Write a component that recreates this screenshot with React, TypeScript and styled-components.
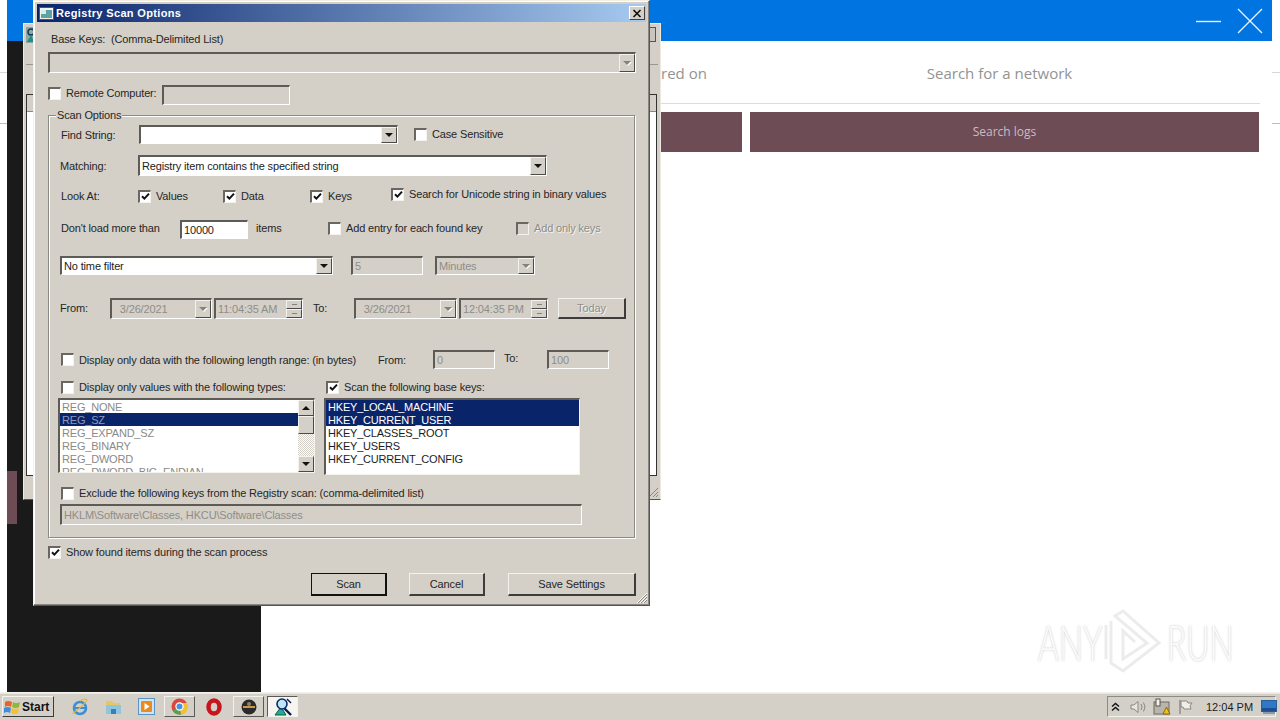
import React from "react";
import styled, { createGlobalStyle } from "styled-components";

const Global = createGlobalStyle`
  html, body { margin: 0; padding: 0; background: #fff; }
  * { box-sizing: border-box; }
`;

const FACE = "#d4d0c8";
const UI = `"Liberation Sans", Arial, sans-serif`;

const Shell = styled.div`
  position: relative; width: 1280px; height: 720px; overflow: hidden;
  display: flex; flex-direction: column; background: #fff; font-family: ${UI};
`;
const Header = styled.header`
  height: 41px; margin: 0 8px 0 7px; background: #0074e0; flex: none;
  display: flex; align-items: center; justify-content: flex-end; gap: 15px; padding-right: 9px;
`;
const Body = styled.div`flex: 1; display: flex; min-height: 0;`;
const EdgeStrip = styled.div`
  width: ${p => p.$w}px; flex: none; padding-top: 31px;
  &::before { content: ""; display: block; height: 50px; border-top: 1px solid #d8d8d8; border-bottom: 1px solid #bdbdbd; }
`;
const Sidebar = styled.aside`width: 254px; flex: none; background: #1a1a1a; padding-top: 430px;`;
const SideChip = styled.div`width: 10px; height: 53px; background: #6e4c55;`;
const Main = styled.main`flex: 1; padding: 0 13px 0 400px; position: relative;`;
const Tabs = styled.div`display: flex; height: 63px; border-bottom: 1px solid #dcdcdc; margin-right: -1px;`;
const Tab = styled.div`
  width: ${p => (p.$w ? `${p.$w}px` : "auto")}; flex: ${p => (p.$w ? "none" : 1)};
  text-align: ${p => (p.$w ? "right" : "center")}; padding-right: ${p => (p.$w ? 45 : 12)}px;
  font: 15px/65px "Open Sans", sans-serif; color: #939393; white-space: nowrap;
`;
const Actions = styled.div`display: flex; gap: 8px; margin-top: 8px;`;
const Action = styled.div`
  height: 40px; background: #6e4c55; color: #c9bcc0; font: 12px/40px "Open Sans", sans-serif; text-align: center;
  width: ${p => (p.$w ? `${p.$w}px` : "auto")}; flex: ${p => (p.$w ? "none" : 1)};
`;
const Watermark = styled.div`
  position: absolute; left: 777px; top: 566px; display: flex; align-items: center; gap: 1px;
`;
const MarkText = styled.span`
  display: block; width: 63px; transform: scaleX(0.64); transform-origin: left center; white-space: nowrap;
  font: 300 50px/50px Lato, sans-serif; color: #fbfbfb;
  text-shadow: 0 0 2px #cfcfcf, 0 0 4px #e2e2e2;
`;

/* windows */
const BackWindow = styled.div`
  position: absolute; left: 23px; top: 23px; width: 638px; height: 477px; background: ${FACE};
  border: 1px solid #eeeae2; border-bottom-color: #555; padding: 3px 2px 0;
  display: flex; flex-direction: column;
`;
const BackClose = styled.div`
  align-self: flex-end; width: 9px; height: 15px; margin-right: 2px; background: #c9c6bf;
  border: 1px solid #555;
`;
const BackGlyph = styled.svg`position: absolute; left: 2px; top: 3px;`;
const BackRule = styled.div`margin-top: 22px; height: 1px; background: #9a978f;`;
const BackList = styled.div`
  margin-top: 29px; height: 382px; margin-right: 1px; background: #fff; border: 1px solid #333;
`;
const BackListHead = styled.div`height: 17px; background: ${FACE}; border-bottom: 1px solid #888;`;
const BackGrip = styled.svg`position: absolute; right: 1px; bottom: 1px;`;

const Dialog = styled.section`
  position: absolute; left: 33px; top: 0; width: 617px; height: 606px; background: ${FACE};
  border: 1px solid #555; border-top-color: #f4efe2; border-left-color: #f4f2ec;
  box-shadow: inset -1px -1px 0 #8a8782, inset 1px 1px 0 #fff;
  padding: 3px 3px 0; color: #222; font-size: 11px;
`;
const TitleBar = styled.div`
  height: 18px; display: flex; align-items: center; padding: 0 1px 0 2px; gap: 2px;
  background: linear-gradient(90deg, #0a246a, #a6caf0);
`;
const TitleText = styled.h1`
  flex: 1; margin: 0; font: bold 11px ${UI}; color: #fff; letter-spacing: 0.35px; white-space: nowrap;
`;
const CloseBtn = styled.div`
  width: 16px; height: 14px; background: ${FACE}; border: 1px solid; border-color: #fff #404040 #404040 #fff;
  display: flex; align-items: center; justify-content: center;
`;
const Content = styled.div`padding: 0 11px;`;
const Row = styled.div`
  display: flex; align-items: center; height: ${p => p.$h}px; margin-top: ${p => p.$mt}px;
  margin-left: ${p => p.$ml || 0}px; white-space: nowrap;
`;
const Text = styled.span`
  flex: none; width: ${p => (p.$w ? `${p.$w}px` : "auto")}; margin-left: ${p => p.$ml || 0}px;
  margin-bottom: ${p => p.$lift || 0}px; padding-left: ${p => p.$pl || 0}px;
  color: ${p => (p.$off ? "#8f8d88" : "#262626")};
  text-shadow: ${p => (p.$off ? "1px 1px 0 #f6f4f0" : "none")};
  letter-spacing: -0.15px;
`;
const Group = styled.div`
  position: relative; margin-top: 10px; width: 587px; height: 423px; padding: 9px 0 0 11px;
  border: 1px solid #8d8b85; box-shadow: 1px 1px 0 #fff, inset 1px 1px 0 #fff;
`;
const Legend = styled.span`
  position: absolute; left: 7px; top: -7px; padding: 0 1px; background: ${FACE}; color: #262626; letter-spacing: -0.15px;
`;
const Sunken = styled.div`
  flex: none; width: ${p => (p.$w ? `${p.$w}px` : "100%")}; height: ${p => p.$h || 19}px;
  margin-left: ${p => p.$ml || 0}px; background: ${p => (p.$off ? FACE : "#fff")};
  border: 2px solid; border-color: #5e5b56 #fff #fff #5e5b56; border-right-width: 1px; border-bottom-width: 1px;
  display: flex; align-items: center; padding-left: 2px; overflow: hidden;
  color: ${p => (p.$off ? "#8f8d88" : "#1c1c1c")};
`;
const FieldText = styled.span`flex: 1; overflow: hidden; letter-spacing: -0.15px;`;
const DropBtn = styled.div`
  flex: none; width: 16px; height: 100%; background: ${FACE};
  border: 1px solid; border-color: #f4f2ec #4a4a48 #4a4a48 #f4f2ec;
  display: flex; align-items: center; justify-content: center;
`;
const Tri = styled.i`
  display: block; width: 0; height: 0; border-left: 4px solid transparent; border-right: 4px solid transparent;
  border-top: 4px solid ${p => (p.$off ? "#85827c" : "#111")};
  filter: ${p => (p.$off ? "drop-shadow(1px 1px 0 #fff)" : "none")};
`;
const TriUp = styled(Tri)`border-top: 0; border-bottom: 4px solid #111;`;
const Spin = styled.div`flex: none; width: 16px; height: 100%; display: flex; flex-direction: column;`;
const SpinPart = styled.div`
  flex: 1; background: ${FACE}; border: 1px solid; border-color: #f4f2ec #4a4a48 #4a4a48 #f4f2ec;
  display: flex; align-items: center; justify-content: center;
`;
const SpinTick = styled.i`display: block; width: 5px; height: 1px; background: #85827c;`;
const Box = styled.span`
  flex: none; width: 13px; height: 13px; background: ${p => (p.$off ? FACE : "#fff")};
  border: 1px solid; border-color: #6a6760 #f4f2ec #f4f2ec #6a6760; border-width: 2px 1px 1px 2px;
  display: flex; align-items: center; justify-content: center;
`;
const CheckWrap = styled.label`
  flex: none; display: flex; align-items: center; gap: 5px; height: 14px;
  width: ${p => (p.$w ? `${p.$w}px` : "auto")}; margin-left: ${p => p.$ml || 0}px;
  margin-bottom: ${p => p.$lift || 0}px;
`;
const PushButton = styled.button`
  flex: none; width: ${p => p.$w}px; height: ${p => p.$h || 23}px; margin-left: ${p => p.$ml || 0}px; padding: 0;
  background: ${FACE}; font: 11px ${UI}; letter-spacing: -0.1px; color: ${p => (p.$off ? "#8f8d88" : "#262626")};
  text-shadow: ${p => (p.$off ? "1px 1px 0 #f6f4f0" : "none")};
  border: 1px solid; border-color: #f4f2ec #3c3c3a #3c3c3a #f4f2ec; border-right-width: 2px; border-bottom-width: 2px;
  ${p => (p.$def ? "border-color: #111;" : "")}
`;
const ListBox = styled.div`
  flex: none; display: flex; align-self: flex-start; width: ${p => p.$w}px; height: ${p => p.$h}px;
  margin-left: ${p => p.$ml || 0}px; background: #fff; overflow: hidden;
  border: 2px solid; border-color: #5e5b56 #f4f2ec #f4f2ec #5e5b56; border-right-width: 1px; border-bottom-width: 1px;
`;
const ListItems = styled.ul`flex: 1; margin: 0; padding: 0; list-style: none; overflow: hidden;`;
const ListItem = styled.li`
  height: 13px; line-height: 13px; padding: 1px 0 0 2px; font-size: 11px; white-space: nowrap; letter-spacing: -0.2px;
  background: ${p => (p.$sel ? "#0a246a" : "transparent")};
  color: ${p => (p.$sel ? (p.$off ? "#8f99b8" : "#fff") : p.$off ? "#8a8a88" : "#1c1c1c")};
`;
const ScrollBar = styled.div`
  flex: none; width: 16px; display: flex; flex-direction: column;
  background: repeating-conic-gradient(#fff 0 25%, ${FACE} 0 50%) 0 0 / 2px 2px;
`;
const ScrollBtn = styled.div`
  flex: none; height: ${p => p.$h || 16}px; background: ${FACE};
  border: 1px solid; border-color: #f4f2ec #4a4a48 #4a4a48 #f4f2ec;
  display: flex; align-items: center; justify-content: center;
`;
const ScrollTrack = styled.span`flex: 1;`;
const ButtonRow = styled.div`display: flex; margin-top: 14px; padding-left: 263px;`;
const Grip = styled.svg`position: absolute; right: 1px; bottom: 1px;`;

/* taskbar */
const Taskbar = styled.footer`
  height: 28px; flex: none; background: ${FACE}; border-top: 1px solid #f4f2ec; box-shadow: inset 0 1px 0 #e9e6df;
  display: flex; align-items: center; padding: 0 4px 0 2px;
`;
const StartBtn = styled.button`
  width: 52px; height: 21px; padding: 0 0 0 1px; display: flex; align-items: center; gap: 1px; background: ${FACE};
  border: 1px solid; border-color: #f4f2ec #3c3c3a #3c3c3a #f4f2ec; font: bold 12px ${UI}; color: #111;
`;
const TaskSlot = styled.div`
  flex: none; width: ${p => p.$w}px; height: 21px; margin-left: ${p => p.$ml}px;
  display: flex; align-items: center; justify-content: center;
  background: ${p => (p.$active ? "#f6f5f2" : FACE)};
  ${p => (p.$raised ? "border: 1px solid; border-color: #f4f2ec #5a5a58 #5a5a58 #f4f2ec;" : "")}
  ${p => (p.$active ? "border: 1px solid; border-color: #5a5a58 #f4f2ec #f4f2ec #5a5a58;" : "")}
`;
const Tray = styled.div`
  margin-left: auto; width: 169px; height: 21px; display: flex; align-items: center; padding-left: 3px;
  border: 1px solid; border-color: #8d8b85 #f4f2ec #f4f2ec #8d8b85; color: #1c1c1c;
`;
const TrayIcon = styled.svg`flex: none; margin-left: ${p => p.$ml || 0}px;`;
const Clock = styled.span`flex: none; margin-left: 13px; width: 52px; font-size: 11px; white-space: nowrap;`;

const Tick = () => (
  <svg width="9" height="9" viewBox="0 0 9 9"><path d="M1 4.2 L3.4 6.6 L8 1.6" fill="none" stroke="#111" strokeWidth="2" /></svg>
);
const Check = ({ on, off, children, w, ml, lift }: any) => (
  <CheckWrap $w={w} $ml={ml} $lift={lift}>
    <Box $off={off}>{on && <Tick />}</Box>
    <Text $off={off}>{children}</Text>
  </CheckWrap>
);
const Combo = ({ w, h, ml, off, children }: any) => (
  <Sunken $w={w} $h={h} $ml={ml} $off={off}>
    <FieldText>{children}</FieldText>
    <DropBtn><Tri $off={off} /></DropBtn>
  </Sunken>
);
const TimeField = ({ w, children, ml }: any) => (
  <Sunken $w={w} $h={21} $ml={ml} $off>
    <FieldText>{children}</FieldText>
    <Spin><SpinPart><SpinTick /></SpinPart><SpinPart><SpinTick /></SpinPart></Spin>
  </Sunken>
);

const TYPES = ["REG_NONE", "REG_SZ", "REG_EXPAND_SZ", "REG_BINARY", "REG_DWORD", "REG_DWORD_BIG_ENDIAN"];
const KEYS = ["HKEY_LOCAL_MACHINE", "HKEY_CURRENT_USER", "HKEY_CLASSES_ROOT", "HKEY_USERS", "HKEY_CURRENT_CONFIG"];

const ScanAppIcon = ({ size = 20 }: { size?: number }) => (
  <svg width={size} height={size} viewBox="0 0 20 20">
    <path d="M2 18 L8 10 L13 18 Z" fill="#2aa5a0" stroke="#063" strokeWidth="1" />
    <path d="M11 11 L18 18" stroke="#0a1a4a" strokeWidth="2.4" />
    <circle cx="9" cy="7" r="5" fill="#bfe6f7" stroke="#0a2a6a" strokeWidth="1.6" />
    <path d="M14 2 L18 6" stroke="#0a1a4a" strokeWidth="1.4" />
  </svg>
);

export default function App() {
  return (
    <Shell>
      <Global />
      <Header>
        <svg width="26" height="26" viewBox="0 0 26 26"><path d="M0 13.5 H25" stroke="#e8f2ff" strokeWidth="1.4" /></svg>
        <svg width="26" height="26" viewBox="0 0 26 26"><path d="M1 1 L25 25 M25 1 L1 25" stroke="#eef6ff" strokeWidth="1.3" /></svg>
      </Header>
      <Body>
        <EdgeStrip $w={7} />
        <Sidebar><SideChip /></Sidebar>
        <Main>
          <Tabs>
            <Tab $w={90}>red on</Tab>
            <Tab>Search for a network</Tab>
          </Tabs>
          <Actions>
            <Action $w={81} />
            <Action>Search logs</Action>
          </Actions>
          <Watermark>
            <MarkText>ANY</MarkText>
            <svg width="64" height="70" viewBox="0 0 62 70">
              <g fill="none" stroke="#ececec" strokeWidth="3">
                <path d="M8 14 V56 L20 64 L56 36 L20 4 L12 9 L44 36 L20 52 V24 L32 35" />
                <path d="M3 18 V52" />
              </g>
            </svg>
            <MarkText>RUN</MarkText>
          </Watermark>
        </Main>
        <EdgeStrip $w={8} />
      </Body>
      <Taskbar>
        <StartBtn>
          <svg width="17" height="16" viewBox="0 0 17 16">
            <path d="M1 3 Q4 1 8 3 L7 8 Q4 6 1 8 Z" fill="#e8622c" />
            <path d="M9 3 Q12 5 16 3 L15 8 Q12 10 8 8 Z" fill="#8fb83a" />
            <path d="M0 9 Q4 7 7 9 L6 14 Q3 12 0 14 Z" fill="#3f8fd8" />
            <path d="M8 9 Q11 11 15 9 L14 14 Q11 16 7 14 Z" fill="#f2c230" />
          </svg>
          Start
        </StartBtn>
        <TaskSlot $w={18} $ml={17}>
          <svg width="18" height="18" viewBox="0 0 18 18">
            <circle cx="9" cy="10" r="6" fill="none" stroke="#3b8fd6" strokeWidth="2.6" />
            <path d="M4 10 H14" stroke="#3b8fd6" strokeWidth="2" />
            <path d="M3 15 Q0 17 5 13 Q14 6 16 2 Q13 0 9 3" fill="none" stroke="#e6b63a" strokeWidth="1.2" />
          </svg>
        </TaskSlot>
        <TaskSlot $w={18} $ml={15}>
          <svg width="17" height="17" viewBox="0 0 17 17">
            <path d="M1 3 H7 L9 5 H15 V8 H1 Z" fill="#e5c765" />
            <path d="M1 7 H16 V16 H1 Z" fill="#8ec6e0" />
            <path d="M6 16 V11 H11 V16 Z" fill="#3c7fb4" />
          </svg>
        </TaskSlot>
        <TaskSlot $w={18} $ml={15}>
          <svg width="17" height="17" viewBox="0 0 17 17">
            <rect x="0.5" y="0.5" width="16" height="16" fill="#cfe3f2" stroke="#5a93c6" />
            <rect x="3" y="3" width="11" height="11" rx="1" fill="#ec8a1e" />
            <path d="M6.5 5 L11.5 8.5 L6.5 12 Z" fill="#fff" />
          </svg>
        </TaskSlot>
        <TaskSlot $w={31} $ml={9} $raised>
          <svg width="17" height="17" viewBox="0 0 17 17">
            <circle cx="8.5" cy="8.5" r="8" fill="#d9483b" />
            <path d="M8.5 8.5 L1.6 12.5 A8 8 0 0 0 10 16.4 Z" fill="#4ca84f" />
            <path d="M8.5 8.5 L10 16.4 A8 8 0 0 0 16 5 L8.5 5 Z" fill="#f0c330" />
            <circle cx="8.5" cy="8.5" r="3.6" fill="#4f8fe0" stroke="#fff" strokeWidth="1.2" />
          </svg>
        </TaskSlot>
        <TaskSlot $w={16} $ml={11}>
          <svg width="16" height="18" viewBox="0 0 16 18">
            <ellipse cx="8" cy="9" rx="5.5" ry="6.5" fill="none" stroke="#c8141c" strokeWidth="4.5" />
          </svg>
        </TaskSlot>
        <TaskSlot $w={31} $ml={11} $raised>
          <svg width="16" height="16" viewBox="0 0 16 16">
            <circle cx="8" cy="8" r="7.5" fill="#2c2a28" />
            <path d="M2 7 H14 V9 H2 Z" fill="#c79a4b" />
            <circle cx="8" cy="5" r="2" fill="#8a8178" />
          </svg>
        </TaskSlot>
        <TaskSlot $w={31} $ml={3} $active><ScanAppIcon /></TaskSlot>
        <Tray>
          <TrayIcon width="9" height="10" viewBox="0 0 9 10">
            <path d="M1 4.5 L4.5 1.5 L8 4.5 M1 8.5 L4.5 5.5 L8 8.5" fill="none" stroke="#111" strokeWidth="1.4" />
          </TrayIcon>
          <TrayIcon $ml={10} width="17" height="14" viewBox="0 0 17 14">
            <path d="M1 5 H4 L8 1.5 V12.5 L4 9 H1 Z" fill="#e8e6e0" stroke="#8a8880" />
            <path d="M11 4 Q13 7 11 10 M13.5 2.5 Q16.5 7 13.5 11.5" fill="none" stroke="#8a8880" />
          </TrayIcon>
          <TrayIcon $ml={6} width="18" height="17" viewBox="0 0 18 17">
            <rect x="1" y="4" width="15" height="12" fill="#b9b5aa" stroke="#6e6a60" />
            <rect x="3" y="1" width="4" height="7" fill="#f4f2ec" stroke="#555" />
            <path d="M10 16 L13.5 9 L17 16 Z" fill="#f0c020" stroke="#8a6a00" />
          </TrayIcon>
          <TrayIcon $ml={7} width="15" height="16" viewBox="0 0 15 16">
            <path d="M2 1 V15" stroke="#8a8880" strokeWidth="1.4" />
            <path d="M3 2 H9 L10 4 H14 L12 7 L13 10 H6 L5 8 H3 Z" fill="#f0eee8" stroke="#8a8880" />
          </TrayIcon>
          <Clock>12:04 PM</Clock>
          <TrayIcon $ml={3} width="16" height="14" viewBox="0 0 16 14">
            <rect x="0.5" y="0.5" width="15" height="11" fill="#2f78c8" stroke="#2a5c96" />
            <rect x="1" y="8" width="14" height="3" fill="#1c4f90" />
            <rect x="2" y="12" width="12" height="2" fill="#8a98a8" />
          </TrayIcon>
        </Tray>
      </Taskbar>

      <BackWindow>
        <BackGlyph width="8" height="16" viewBox="0 0 8 16">
          <rect width="8" height="16" fill="#8fa7a0" />
          <circle cx="5" cy="5" r="3" fill="none" stroke="#0b3a5c" strokeWidth="1.4" />
          <path d="M1 15 L5 8 L8 15 Z" fill="#1d8f8a" />
        </BackGlyph>
        <BackClose />
        <BackRule />
        <BackList><BackListHead /></BackList>
        <BackGrip width="11" height="11" viewBox="0 0 11 11">
          <path d="M10 1 L1 10 M10 5 L5 10 M10 8 L8 10" stroke="#8a8782" />
        </BackGrip>
      </BackWindow>

      <Dialog>
        <TitleBar>
          <svg width="15" height="13" viewBox="0 0 15 13">
            <rect x="0.5" y="0.5" width="14" height="12" fill="#f2f2ee" stroke="#555" />
            <rect x="2" y="3" width="11" height="8" fill="#5fa3a0" />
            <rect x="2" y="3" width="5" height="4" fill="#d9ecec" />
          </svg>
          <TitleText>Registry Scan Options</TitleText>
          <CloseBtn>
            <svg width="10" height="9" viewBox="0 0 10 9"><path d="M1.5 1 L8.5 8 M8.5 1 L1.5 8" stroke="#111" strokeWidth="1.7" /></svg>
          </CloseBtn>
        </TitleBar>
        <Content>
          <Row $h={14} $mt={10} $ml={3}><Text>Base Keys:&nbsp; (Comma-Delimited List)</Text></Row>
          <Row $h={21} $mt={6}><Combo w={588} h={21} off /></Row>
          <Row $h={20} $mt={12}>
            <Check w={114} lift={4}>Remote Computer:</Check>
            <Sunken $w={128} $h={20} $off />
          </Row>
          <Group>
            <Legend>Scan Options</Legend>
            <Row $h={19} $mt={0}>
              <Text $w={79} $pl={1}>Find String:</Text>
              <Combo w={259} />
              <Check ml={16} lift={1}>Case Sensitive</Check>
            </Row>
            <Row $h={21} $mt={11}>
              <Text $w={78}>Matching:</Text>
              <Combo w={409} h={21}>Registry item contains the specified string</Combo>
            </Row>
            <Row $h={20} $mt={10}>
              <Text $w={78} $pl={1}>Look At:</Text>
              <Check on w={85}>Values</Check>
              <Check on w={87}>Data</Check>
              <Check on w={81}>Keys</Check>
              <Check on lift={4}>Search for Unicode string in binary values</Check>
            </Row>
            <Row $h={19} $mt={14}>
              <Text $w={120} $pl={1} $lift={3}>Don't load more than</Text>
              <Sunken $w={68}><FieldText>10000</FieldText></Sunken>
              <Text $w={72} $ml={8} $lift={3}>items</Text>
              <Check w={188} lift={3}>Add entry for each found key</Check>
              <Check off lift={3}>Add only keys</Check>
            </Row>
            <Row $h={19} $mt={17}>
              <Combo w={273}>No time filter</Combo>
              <Sunken $w={72} $ml={18} $off><FieldText>5</FieldText></Sunken>
              <Combo w={100} ml={12} off>Minutes</Combo>
            </Row>
            <Row $h={21} $mt={23}>
              <Text $w={50} $lift={2}>From:</Text>
              <Combo w={102} h={21} off>&nbsp;&nbsp;3/26/2021</Combo>
              <TimeField w={89} ml={2}>11:04:35 AM</TimeField>
              <Text $w={41} $ml={10} $lift={2}>To:</Text>
              <Combo w={103} h={21} off>&nbsp;&nbsp;3/26/2021</Combo>
              <TimeField w={89} ml={2}>12:04:35 PM</TimeField>
              <PushButton $w={68} $h={21} $ml={10} $off>Today</PushButton>
            </Row>
            <Row $h={19} $mt={31}>
              <Check w={317} ml={1}>Display only data with the following length range: (in bytes)</Check>
              <Text $w={55}>From:</Text>
              <Sunken $w={62} $off><FieldText>0</FieldText></Sunken>
              <Text $w={43} $ml={9} $lift={3}>To:</Text>
              <Sunken $w={62} $off><FieldText>100</FieldText></Sunken>
            </Row>
            <Row $h={16} $mt={10}>
              <Check w={265} ml={1}>Display only values with the following types:</Check>
              <Check on>Scan the following base keys:</Check>
            </Row>
            <Row $h={77} $mt={3}>
              <ListBox $w={257} $h={75} $ml={-2}>
                <ListItems>
                  {TYPES.map((t, i) => <ListItem key={t} $sel={i === 1} $off>{t}</ListItem>)}
                </ListItems>
                <ScrollBar>
                  <ScrollBtn><TriUp /></ScrollBtn>
                  <ScrollBtn $h={18} />
                  <ScrollTrack />
                  <ScrollBtn><Tri /></ScrollBtn>
                </ScrollBar>
              </ListBox>
              <ListBox $w={256} $h={77} $ml={9}>
                <ListItems>
                  {KEYS.map((k, i) => <ListItem key={k} $sel={i < 2}>{k}</ListItem>)}
                </ListItems>
              </ListBox>
            </Row>
            <Row $h={16} $mt={10}>
              <Check ml={1}>Exclude the following keys from the Registry scan: (comma-delimited list)</Check>
            </Row>
            <Row $h={21} $mt={3}>
              <Sunken $w={522} $h={21} $off><FieldText>HKLM\Software\Classes, HKCU\Software\Classes</FieldText></Sunken>
            </Row>
          </Group>
          <Row $h={14} $mt={7}><Check on>Show found items during the scan process</Check></Row>
          <ButtonRow>
            <PushButton $w={76} $def>Scan</PushButton>
            <PushButton $w={76} $ml={22}>Cancel</PushButton>
            <PushButton $w={128} $ml={23}>Save Settings</PushButton>
          </ButtonRow>
        </Content>
        <Grip width="12" height="12" viewBox="0 0 12 12">
          <path d="M11 1 L1 11 M11 4 L4 11 M11 7 L7 11" stroke="#fff" />
          <path d="M11 2 L2 11 M11 5 L5 11 M11 8 L8 11" stroke="#8a8782" />
        </Grip>
      </Dialog>
    </Shell>
  );
}
